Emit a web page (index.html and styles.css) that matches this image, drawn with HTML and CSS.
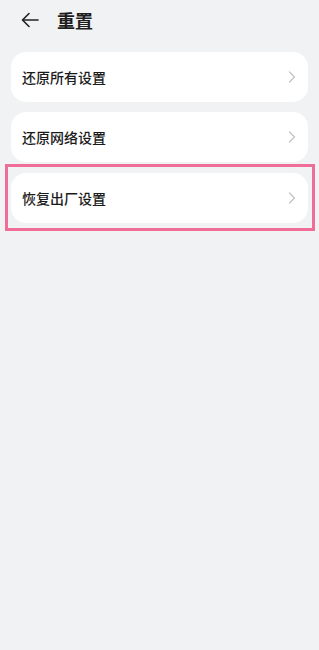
FILE: index.html
```html
<!DOCTYPE html>
<html lang="zh-CN">
<head>
<meta charset="utf-8">
<link rel="stylesheet" href="styles.css">
</head>
<body>
<div class="page">
  <header class="header">
    <svg class="back" width="18" height="16" viewBox="0 0 18 16" fill="none" stroke="#222" stroke-width="1.6" stroke-linecap="round" stroke-linejoin="round">
      <path d="M17 8H2"/>
      <path d="M8 1.5L1.5 8L8 14.5"/>
    </svg>
    <h1 class="title">重置</h1>
  </header>
  <main class="list">
    <div class="card">
      <span class="label">还原所有设置</span>
      <svg class="chev" width="8" height="12" viewBox="0 0 8 12" fill="none" stroke="#c4c4c6" stroke-width="1.3" stroke-linecap="round" stroke-linejoin="round"><path d="M1.5 1L6.5 6L1.5 11"/></svg>
    </div>
    <div class="card">
      <span class="label">还原网络设置</span>
      <svg class="chev" width="8" height="12" viewBox="0 0 8 12" fill="none" stroke="#c4c4c6" stroke-width="1.3" stroke-linecap="round" stroke-linejoin="round"><path d="M1.5 1L6.5 6L1.5 11"/></svg>
    </div>
    <div class="card highlighted">
      <span class="label">恢复出厂设置</span>
      <svg class="chev" width="8" height="12" viewBox="0 0 8 12" fill="none" stroke="#c4c4c6" stroke-width="1.3" stroke-linecap="round" stroke-linejoin="round"><path d="M1.5 1L6.5 6L1.5 11"/></svg>
    </div>
  </main>
</div>
</body>
</html>
```
FILE: styles.css
```css
html, body {
  margin: 0;
  padding: 0;
  background: #f1f2f4;
}
body {
  font-family: "Noto Sans CJK SC", "Noto Sans", sans-serif;
  color: #1b1b1b;
  width: 319px;
  height: 650px;
  overflow: hidden;
}
.header {
  height: 42px;
  display: flex;
  align-items: center;
  padding-left: 21px;
}
.back {
  display: block;
  margin-top: -2px;
}
.title {
  margin: 0 0 0 18px;
  font-size: 18px;
  font-weight: 700;
  line-height: 1;
  margin-top: -3px;
  color: #1e1e1e;
}
.list {
  display: flex;
  flex-direction: column;
  gap: 10px;
  padding: 10px 11px 0 11px;
}
.card {
  height: 50px;
  background: #fff;
  border-radius: 15px;
  display: flex;
  align-items: center;
  justify-content: space-between;
  padding: 0 12px 0 11px;
}
.label {
  font-size: 14px;
  font-weight: 500;
  letter-spacing: 0;
  color: #1b1b1b;
}
.chev {
  display: block;
}
.highlighted {
  position: relative;
  margin-top: 1px;
}
.highlighted::after {
  content: "";
  position: absolute;
  left: -6px;
  right: -7px;
  top: -9px;
  bottom: -8px;
  border: 3px solid #ef6e97;
  pointer-events: none;
}
```
